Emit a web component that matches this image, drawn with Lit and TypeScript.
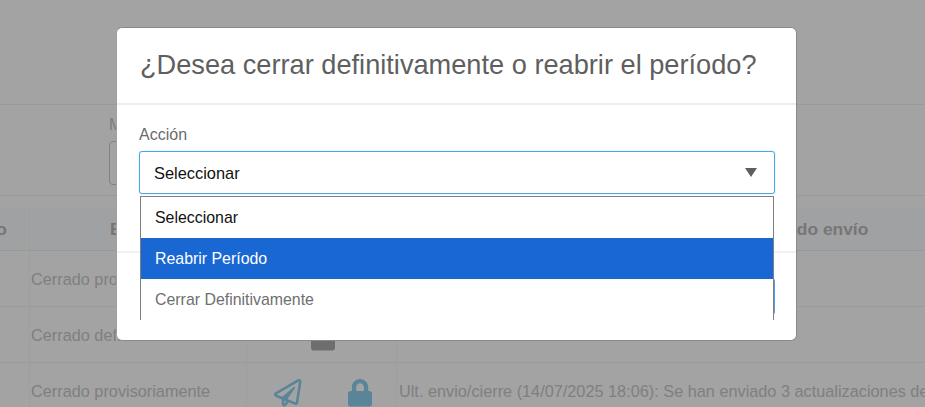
import {LitElement, html, css, svg} from 'lit';
import {customElement} from 'lit/decorators.js';

const PLANE = svg`<path d="M440 6.5L24 246.4c-34.4 19.9-31.1 70.8 5.7 85.9L144 379.6V464c0 46.4 59.2 65.5 86.6 28.6l43.8-59.1 111.9 46.2c5.9 2.4 12.1 3.6 18.3 3.6 8.2 0 16.3-2.1 23.6-6.2 12.8-7.2 21.6-20 23.9-34.5l59.4-387.2c6.1-40.1-36.9-68.8-71.5-48.9zM192 464v-64.6l36.6 15.1L192 464zm212.6-28.7l-153.8-63.5L391 169.5c10.7-15.5-9.5-33.5-23.7-21.2L155.8 332.6 48 288 464 48l-59.4 387.3z"/>`;
const LOCK = svg`<path d="M400 224h-24v-72C376 68.2 307.8 0 224 0S72 68.2 72 152v72H48c-26.5 0-48 21.5-48 48v192c0 26.5 21.5 48 48 48h352c26.5 0 48-21.5 48-48V272c0-26.5-21.5-48-48-48zm-104 0H152v-72c0-39.7 32.3-72 72-72s72 32.3 72 72v72z"/>`;

const ROWS = [
  {state: 'Cerrado provisoriamente', plane: false, lock: '', note: ''},
  {state: 'Cerrado definitivamente', plane: false, lock: 'muted', note: ''},
  {
    state: 'Cerrado provisoriamente',
    plane: true,
    lock: 'active',
    note: 'Ult. envio/cierre (14/07/2025 18:06): Se han enviado 3 actualizaciones de',
  },
];

@customElement('app-root')
export class AppRoot extends LitElement {
  static styles = css`
    :host {
      display: block;
      position: relative;
      width: 925px;
      height: 407px;
      overflow: hidden;
      background: #fff;
      font-family: 'Liberation Sans', Arial, sans-serif;
    }

    .top {
      height: 105px;
      border-bottom: 1px solid #f0f0f0;
      box-sizing: border-box;
    }

    .filters {
      height: 91px;
      box-sizing: border-box;
      padding: 11px 0 0 109px;
      border-bottom: 1px solid #eee;
      color: #c4c4c4;
      font-size: 16px;
      line-height: 18px;
    }

    .filters .input {
      width: 200px;
      height: 44px;
      margin-top: 7px;
      box-sizing: border-box;
      border: 1px solid #ccc;
      border-radius: 4px;
    }

    .table {
      margin-top: 11px;
      color: #c8c8c8;
      font-size: 16.3px;
    }

    .row {
      display: grid;
      grid-template-columns: 30px 217px 150px 528px;
      height: 56px;
      border-bottom: 1px solid #f2f2f2;
      box-sizing: border-box;
    }

    .row.head {
      height: 44px;
      padding-top: 1px;
      background: #fbfcfe;
      font-weight: 700;
      font-size: 17.4px;
      color: #b9b9b9;
      border-bottom-color: #eee;
    }

    .cell {
      display: flex;
      align-items: center;
      min-width: 0;
      overflow: hidden;
      white-space: nowrap;
      border-right: 1px solid #f8f8f8;
    }

    .cell.first {
      justify-content: flex-end;
      padding-right: 22px;
    }

    .cell.center {
      justify-content: center;
      padding-left: 2px;
    }

    .cell.state {
      padding: 2px 0 0 1px;
    }

    .cell.icon-cell {
      justify-content: center;
      padding: 5px 0 0 3px;
    }

    .cell.last {
      padding: 2px 0 0 2px;
      border-right: none;
    }

    .cell.sent {
      padding-left: 337px;
      border-right: none;
    }

    .icons {
      display: flex;
      align-items: center;
      gap: 46px;
    }

    .icons svg {
      display: block;
      height: 27.5px;
      width: auto;
    }

    .plane,
    .lock-active {
      fill: #8ed0ef;
    }

    .lock-muted {
      fill: #adadad;
    }

    .overlay {
      position: absolute;
      inset: 0;
      padding: 27px 0 0 116px;
      background: rgba(0, 0, 0, 0.36);
    }

    .modal {
      width: 681px;
      height: 314px;
      box-sizing: border-box;
      background: #fff;
      border: 1px solid #8a8a8a;
      border-left-color: #a0a0a0;
      border-radius: 6px;
      overflow: hidden;
    }

    .modal-header {
      height: 77px;
      box-sizing: border-box;
      padding: 21px 21px 0 23px;
      border-bottom: 2px solid #e9eef3;
    }

    h2 {
      margin: 0;
      font-size: 27.2px;
      font-weight: 400;
      line-height: 32px;
      color: #5f5f5f;
      white-space: nowrap;
    }

    .modal-body {
      height: 148px;
      box-sizing: border-box;
      padding: 20px 21px 0 22px;
      border-bottom: 2px solid #eef1f5;
    }

    label {
      display: block;
      height: 26px;
      font-size: 16px;
      line-height: 20px;
      color: #6b6b6b;
    }

    .select-wrap {
      position: relative;
    }

    .select {
      display: flex;
      align-items: center;
      justify-content: space-between;
      height: 43px;
      box-sizing: border-box;
      padding: 2px 17px 0 14px;
      border: 1px solid #4aa8e0;
      border-radius: 3px;
      box-shadow: 0 0 1px #4aa8e0;
      font-size: 16.4px;
      color: #111;
    }

    .arrow {
      width: 0;
      height: 0;
      margin-bottom: 2px;
      border-left: 6.5px solid transparent;
      border-right: 6.5px solid transparent;
      border-top: 9px solid #5f5f5f;
    }

    .dropdown {
      position: absolute;
      top: 45px;
      left: 1px;
      right: 1px;
      height: 124px;
      box-sizing: border-box;
      background: #fff;
      border: 1px solid #808080;
      border-bottom: none;
      font-size: 15.9px;
      z-index: 1;
    }

    .option {
      height: 41px;
      box-sizing: border-box;
      padding-left: 14px;
      display: flex;
      align-items: center;
      color: #6f6f6f;
    }

    .option.plain {
      color: #111;
    }

    .option.selected {
      background: #1967d2;
      color: #fff;
    }

    .modal-footer {
      padding: 25px 21px 0 24px;
    }

    .footer-btn {
      height: 37px;
      border: 1px solid #4a9ae8;
      border-radius: 3px;
      box-sizing: border-box;
    }
  `;

  renderRow(row: (typeof ROWS)[number]) {
    return html`
      <div class="row">
        <div class="cell"></div>
        <div class="cell state">${row.state}</div>
        <div class="cell icon-cell">
          <div class="icons">
            ${row.plane ? html`<svg class="plane" viewBox="0 0 512 512">${PLANE}</svg>` : ''}
            ${row.lock
              ? html`<svg class="lock-${row.lock}" viewBox="0 0 448 512">${LOCK}</svg>`
              : ''}
          </div>
        </div>
        <div class="cell last">${row.note}</div>
      </div>
    `;
  }

  render() {
    return html`
      <div class="top"></div>
      <div class="filters">
        Mes
        <div class="input"></div>
      </div>
      <div class="table">
        <div class="row head">
          <div class="cell first">Período</div>
          <div class="cell center">Estado</div>
          <div class="cell center">Acciones</div>
          <div class="cell sent">Resultado envío</div>
        </div>
        ${ROWS.map((row) => this.renderRow(row))}
      </div>

      <div class="overlay">
        <div class="modal">
          <div class="modal-header">
            <h2>¿Desea cerrar definitivamente o reabrir el período?</h2>
          </div>
          <div class="modal-body">
            <label>Acción</label>
            <div class="select-wrap">
              <div class="select">
                <span>Seleccionar</span>
                <span class="arrow"></span>
              </div>
              <div class="dropdown">
                <div class="option plain">Seleccionar</div>
                <div class="option selected">Reabrir Período</div>
                <div class="option">Cerrar Definitivamente</div>
              </div>
            </div>
          </div>
          <div class="modal-footer">
            <div class="footer-btn"></div>
          </div>
        </div>
      </div>
    `;
  }
}
